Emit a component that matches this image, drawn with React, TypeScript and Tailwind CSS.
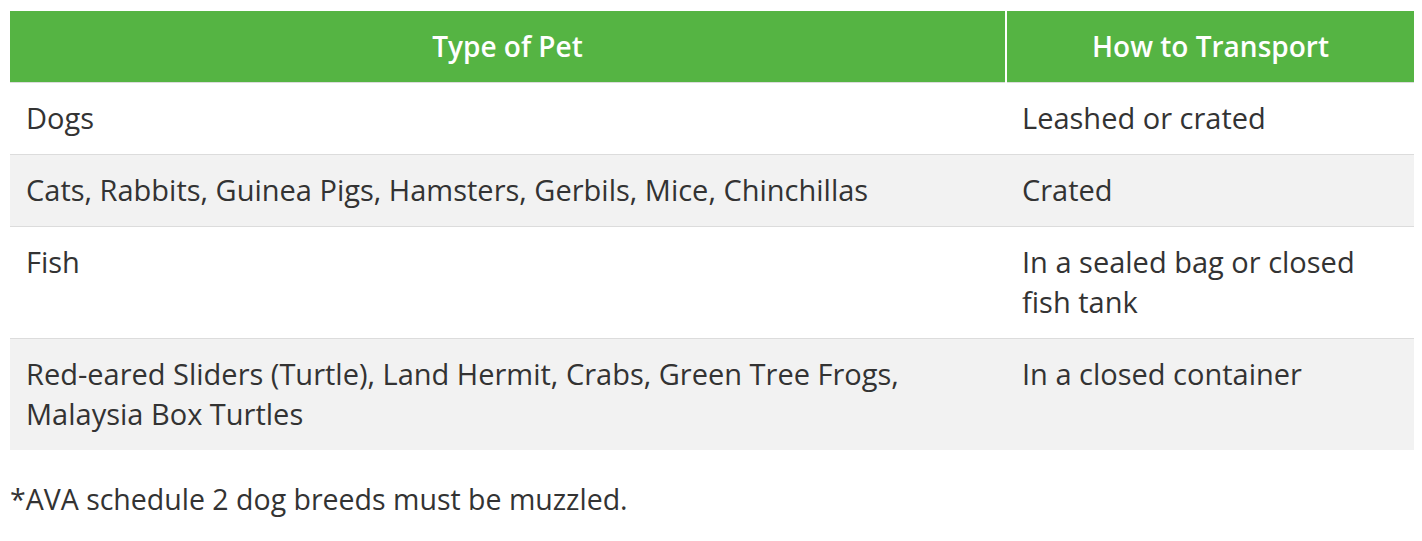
const rows = [
  { pet: "Dogs", how: "Leashed or crated" },
  { pet: "Cats, Rabbits, Guinea Pigs, Hamsters, Gerbils, Mice, Chinchillas", how: "Crated" },
  { pet: "Fish", how: "In a sealed bag or closed fish tank" },
  {
    pet: "Red-eared Sliders (Turtle), Land Hermit, Crabs, Green Tree Frogs, Malaysia Box Turtles",
    how: "In a closed container",
  },
];

export default function App() {
  return (
    <div className="bg-white min-h-screen px-[10px] pt-[11px] text-[#333] font-['Open_Sans',sans-serif]">
      <table className="w-[1404px] table-fixed border-collapse">
        <colgroup>
          <col className="w-[996px]" />
          <col className="w-[408px]" />
        </colgroup>
        <thead>
          <tr className="bg-[#55b443] text-white h-[71px]">
            <th className="text-[28px] font-semibold text-center border-r-2 border-white">Type of Pet</th>
            <th className="text-[28px] font-semibold text-center">How to Transport</th>
          </tr>
        </thead>
        <tbody>
          {rows.map((r, i) => (
            <tr key={i} className={`border-t border-[#dcdcdc] ${i % 2 === 1 ? "bg-[#f2f2f2]" : "bg-white"}`}>
              <td className="align-top px-4 py-[15.5px] text-[29px] leading-[40px]">{r.pet}</td>
              <td className="align-top px-4 py-[15.5px] text-[29px] leading-[40px]">{r.how}</td>
            </tr>
          ))}
        </tbody>
      </table>
      <p className="mt-[29px] text-[28.5px] leading-[40px]">*AVA schedule 2 dog breeds must be muzzled.</p>
    </div>
  );
}
